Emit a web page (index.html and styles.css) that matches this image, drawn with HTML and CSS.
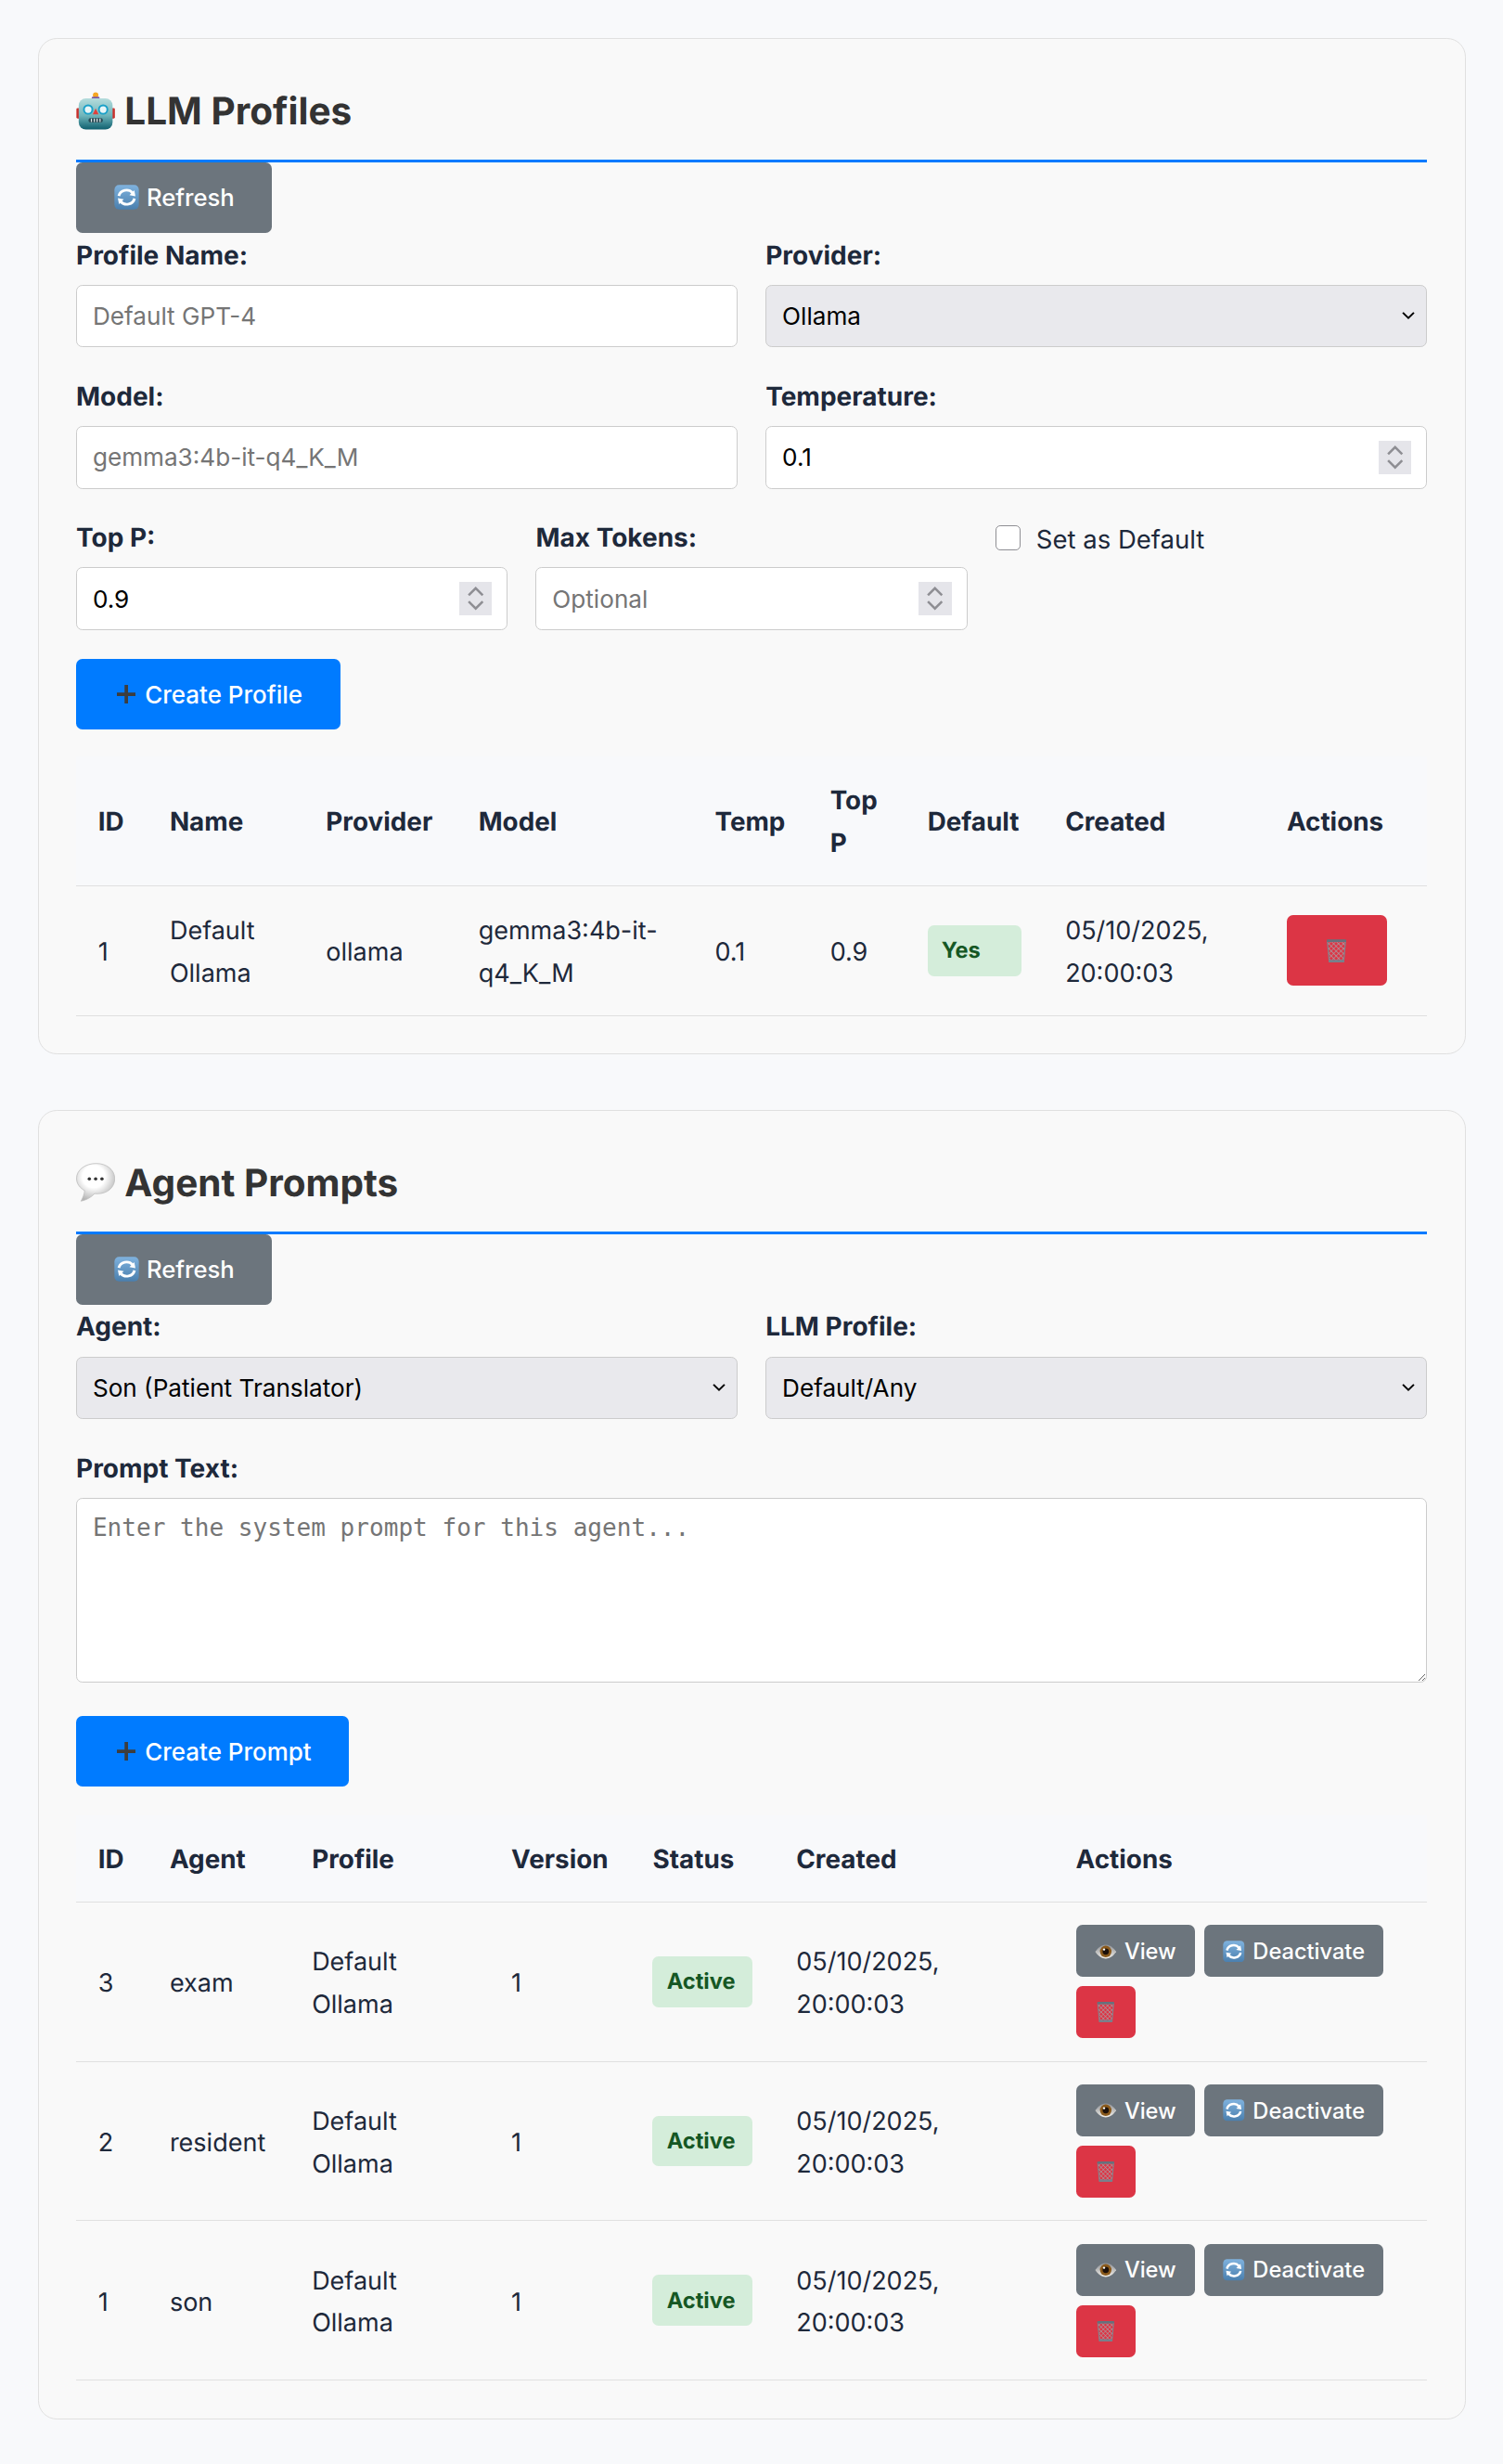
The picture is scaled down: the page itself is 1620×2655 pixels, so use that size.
FILE: index.html
```html
<!DOCTYPE html>
<html lang="en">
  <head>
    <meta charset="utf-8" />
    <meta name="viewport" content="width=device-width, initial-scale=1.0" />
    <title>LLM Profiles and Agent Prompts</title>
    <link rel="stylesheet" href="styles.css">
  </head>

  <body>
    <!-- emoji drawn once, used everywhere below -->
    <svg class="sprite" aria-hidden="true">
      <defs>
        <linearGradient id="robotFace" x1="0" y1="0" x2="0" y2="1">
          <stop offset="0" stop-color="#b5dcdc" />
          <stop offset="0.55" stop-color="#6fb5bb" />
          <stop offset="1" stop-color="#0f5f6e" />
        </linearGradient>
        <linearGradient id="refreshBox" x1="0" y1="0" x2="0" y2="1">
          <stop offset="0" stop-color="#7fb2de" />
          <stop offset="1" stop-color="#4a7fae" />
        </linearGradient>
        <radialGradient id="bubbleFill" cx="0.45" cy="0.35" r="0.65">
          <stop offset="0.45" stop-color="#ffffff" />
          <stop offset="1" stop-color="#b4b4b4" />
        </radialGradient>
        <linearGradient id="eyeWhite" x1="0" y1="0" x2="0" y2="1">
          <stop offset="0" stop-color="#8c8f94" />
          <stop offset="1" stop-color="#f2efe9" />
        </linearGradient>
        <pattern id="mesh" width="2.2" height="2.2" patternUnits="userSpaceOnUse" patternTransform="rotate(45)">
          <path d="M0 0H2.2M0 0V2.2" stroke="#a7a3a8" stroke-width="0.7" fill="none" />
        </pattern>
      </defs>

      <symbol id="i-robot" viewBox="0 0 24 24">
        <circle cx="12" cy="2.6" r="1.7" fill="#f5a623" />
        <rect x="9.6" y="3.6" width="4.8" height="1.8" rx="0.6" fill="#7a5aa6" />
        <rect x="0.2" y="10.5" width="2.4" height="6.4" rx="0.8" fill="#c9302c" />
        <rect x="21.4" y="10.5" width="2.4" height="6.4" rx="0.8" fill="#c9302c" />
        <rect x="1.6" y="4.6" width="20.8" height="19" rx="4.4" fill="url(#robotFace)" />
        <circle cx="7.4" cy="11.4" r="2.6" fill="#e8f6f8" stroke="#1aa0c8" stroke-width="1.1" />
        <circle cx="16.6" cy="11.4" r="2.6" fill="#e8f6f8" stroke="#1aa0c8" stroke-width="1.1" />
        <path d="M12 10.6L13.8 14.4H10.2Z" fill="#e0403c" />
        <rect x="7.6" y="16.6" width="8.8" height="2.7" rx="1.3" fill="#274a55" />
        <path d="M9.4 16.9V19M11.2 16.9V19M12.9 16.9V19M14.7 16.9V19" stroke="#dfe7e8" stroke-width="0.7" />
      </symbol>

      <symbol id="i-bubble" viewBox="0 0 26 26">
        <path d="M13.4.4C6.400.4.300 4.400.300 10.400c0 3.400 2.200 6.300 5.400 8-.2 2.200-1 4.500-2.400 7 3.400-.6 6.800-2.500 9-5 .6.100 1.300.1 1.900.1 6.600 0 11.500-4.200 11.500-10C25.700 4.600 20.300.4 13.400.4Z" fill="url(#bubbleFill)" stroke="#bdbdbd" stroke-width="0.5" />
        <circle cx="8.800" cy="10.600" r="1.100" fill="#333" />
        <circle cx="13" cy="10.600" r="1.100" fill="#333" />
        <circle cx="17.200" cy="10.600" r="1.100" fill="#333" />
      </symbol>

      <symbol id="i-refresh" viewBox="0 0 16 16">
        <rect x="0.2" y="0.2" width="15.6" height="15.600" rx="3" fill="url(#refreshBox)" />
        <path d="M3 7.200A5 4.600 0 0 1 11.800 5.200" fill="none" stroke="#fff" stroke-width="1.700" />
        <path d="M13.600 7.400L9.800 6.700L12.900 3.600Z" fill="#fff" />
        <path d="M13 8.800A5 4.600 0 0 1 4.200 10.800" fill="none" stroke="#fff" stroke-width="1.700" />
        <path d="M2.400 8.600L6.200 9.300L3.100 12.400Z" fill="#fff" />
      </symbol>

      <symbol id="i-eye" viewBox="0 0 16 16">
        <path d="M.3 8.200C3 4.300 5.400 3 8 3s5 1.300 7.700 5.200C13 12 10.600 13.200 8 13.200S3 12 .3 8.200Z" fill="url(#eyeWhite)" />
        <circle cx="8" cy="8" r="4.200" fill="#8a5a1c" />
        <circle cx="8" cy="8" r="2.300" fill="#1c1009" />
        <circle cx="6.800" cy="6.500" r="0.800" fill="#fff" />
      </symbol>

      <symbol id="i-trash" viewBox="0 0 16 16">
        <path d="M2.200 1.800H13.800L12.600 15H3.400Z" fill="url(#mesh)" />
        <path d="M2.200 1.800H13.800L12.600 15H3.400Z" fill="none" stroke="#7d858e" stroke-width="0.7" />
        <rect x="1.800" y="0.700" width="12.400" height="1.700" rx="0.500" fill="#66717c" />
        <rect x="3.200" y="13.800" width="9.600" height="1.600" rx="0.500" fill="#76818d" />
      </symbol>

      <symbol id="i-plus" viewBox="0 0 12 12">
        <path d="M4.900 0H7.100V4.900H12V7.100H7.100V12H4.900V7.100H0V4.900H4.900Z" fill="#3d3d3d" />
      </symbol>
    </svg>

    <section class="kort">
      <h2 class="titel"><svg class="ikon-titel"><use href="#i-robot" /></svg>LLM Profiles</h2>
      <button class="knap graa"><svg class="ikon"><use href="#i-refresh" /></svg>Refresh</button>

      <div class="raekke to">
        <div class="felt">
          <label>Profile Name:</label>
          <input type="text" placeholder="Default GPT-4">
        </div>
        <div class="felt">
          <label>Provider:</label>
          <select><option>Ollama</option></select>
        </div>
      </div>

      <div class="raekke to">
        <div class="felt">
          <label>Model:</label>
          <input type="text" placeholder="gemma3:4b-it-q4_K_M">
        </div>
        <div class="felt">
          <label>Temperature:</label>
          <div class="tal">
            <input type="text" value="0.1">
            <span class="spinner"><svg viewBox="0 0 21 21"><path d="M6 8.500L10.500 4L15 8.500M6 12.500L10.500 17L15 12.500" /></svg></span>
          </div>
        </div>
      </div>

      <div class="raekke tre">
        <div class="felt">
          <label>Top P:</label>
          <div class="tal">
            <input type="text" value="0.9">
            <span class="spinner"><svg viewBox="0 0 21 21"><path d="M6 8.500L10.500 4L15 8.500M6 12.500L10.500 17L15 12.500" /></svg></span>
          </div>
        </div>
        <div class="felt">
          <label>Max Tokens:</label>
          <div class="tal">
            <input type="text" placeholder="Optional">
            <span class="spinner"><svg viewBox="0 0 21 21"><path d="M6 8.500L10.500 4L15 8.500M6 12.500L10.500 17L15 12.500" /></svg></span>
          </div>
        </div>
        <div class="felt">
          <label class="tjek"><input type="checkbox">Set as Default</label>
        </div>
      </div>

      <button class="knap blaa"><svg class="ikon plus"><use href="#i-plus" /></svg>Create Profile</button>

      <table class="tabel">
        <colgroup>
          <col class="p1"><col class="p2"><col class="p3"><col class="p4"><col class="p5"><col class="p6"><col class="p7"><col class="p8"><col>
        </colgroup>
        <thead>
          <tr><th>ID</th><th>Name</th><th>Provider</th><th>Model</th><th>Temp</th><th>Top P</th><th>Default</th><th>Created</th><th>Actions</th></tr>
        </thead>
        <tbody>
          <tr>
            <td>1</td>
            <td>Default Ollama</td>
            <td>ollama</td>
            <td>gemma3:4b-it-q4_K_M</td>
            <td>0.1</td>
            <td>0.9</td>
            <td><span class="maerke">Yes</span></td>
            <td>05/10/2025, 20:00:03</td>
            <td><button class="knap roed slet"><svg class="ikon alene"><use href="#i-trash" /></svg></button></td>
          </tr>
        </tbody>
      </table>
    </section>

    <section class="kort">
      <h2 class="titel"><svg class="ikon-titel"><use href="#i-bubble" /></svg>Agent Prompts</h2>
      <button class="knap graa"><svg class="ikon"><use href="#i-refresh" /></svg>Refresh</button>

      <div class="raekke to">
        <div class="felt">
          <label>Agent:</label>
          <select><option>Son (Patient Translator)</option></select>
        </div>
        <div class="felt">
          <label>LLM Profile:</label>
          <select><option>Default/Any</option></select>
        </div>
      </div>

      <div class="raekke tekstfelt">
        <div class="felt">
          <label>Prompt Text:</label>
          <textarea placeholder="Enter the system prompt for this agent..."></textarea>
        </div>
      </div>

      <button class="knap blaa"><svg class="ikon plus"><use href="#i-plus" /></svg>Create Prompt</button>

      <table class="tabel prompts">
        <colgroup>
          <col class="a1"><col class="a2"><col class="a3"><col class="a4"><col class="a5"><col class="a6"><col>
        </colgroup>
        <thead>
          <tr><th>ID</th><th>Agent</th><th>Profile</th><th>Version</th><th>Status</th><th>Created</th><th>Actions</th></tr>
        </thead>
        <tbody>
          <tr>
            <td>3</td><td>exam</td><td>Default<br>Ollama</td><td>1</td>
            <td><span class="maerke">Active</span></td>
            <td>05/10/2025,<br>20:00:03</td>
            <td>
              <div class="handlinger">
                <button class="knap lille graa"><svg class="ikon"><use href="#i-eye" /></svg>View</button>
                <button class="knap lille graa"><svg class="ikon"><use href="#i-refresh" /></svg>Deactivate</button>
                <button class="knap lille roed"><svg class="ikon alene"><use href="#i-trash" /></svg></button>
              </div>
            </td>
          </tr>
          <tr>
            <td>2</td><td>resident</td><td>Default<br>Ollama</td><td>1</td>
            <td><span class="maerke">Active</span></td>
            <td>05/10/2025,<br>20:00:03</td>
            <td>
              <div class="handlinger">
                <button class="knap lille graa"><svg class="ikon"><use href="#i-eye" /></svg>View</button>
                <button class="knap lille graa"><svg class="ikon"><use href="#i-refresh" /></svg>Deactivate</button>
                <button class="knap lille roed"><svg class="ikon alene"><use href="#i-trash" /></svg></button>
              </div>
            </td>
          </tr>
          <tr>
            <td>1</td><td>son</td><td>Default<br>Ollama</td><td>1</td>
            <td><span class="maerke">Active</span></td>
            <td>05/10/2025,<br>20:00:03</td>
            <td>
              <div class="handlinger">
                <button class="knap lille graa"><svg class="ikon"><use href="#i-eye" /></svg>View</button>
                <button class="knap lille graa"><svg class="ikon"><use href="#i-refresh" /></svg>Deactivate</button>
                <button class="knap lille roed"><svg class="ikon alene"><use href="#i-trash" /></svg></button>
              </div>
            </td>
          </tr>
        </tbody>
      </table>
    </section>
  </body>
</html>
```

FILE: styles.css
```css
/* the page is a 960px layout shown at 1.6875x */
html {
  zoom: 1.6875;
}

body {
  margin: 0;
  padding: 24.5px 24px 28px;
  background-color: #f8f9fb;
  color: #1e293b;
  font-family: "Inter", "Liberation Sans", sans-serif;
  font-size: 16px;
  line-height: 1.7;
  text-rendering: geometricPrecision;
}

.sprite {
  position: absolute;
  width: 0;
  height: 0;
}

.kort {
  background-color: #f9f9f9;
  border: 1px solid #e0e0e0;
  border-radius: 12px;
  padding: 24px;
  margin-bottom: 35.5px;
}

.kort:last-of-type {
  margin-bottom: 0;
}

.titel {
  display: flex;
  align-items: center;
  margin: 0;
  padding-top: 2px;
  padding-bottom: 10px;
  border-bottom: 2px solid #007bff;
  color: #333;
  font-size: 24px;
  font-weight: 700;
  line-height: 1.7;
}

.ikon-titel {
  width: 25px;
  height: 25px;
  margin-top: -2px;
  margin-right: 6px;
}

/* knapper */
.knap {
  display: inline-flex;
  align-items: center;
  justify-content: center;
  height: 45px;
  padding: 0 24px;
  border: 0;
  border-radius: 4px;
  color: white;
  font-family: inherit;
  font-size: 15.2px;
  font-weight: 500;
  cursor: pointer;
}

.graa {
  background-color: #6c757d;
}

.blaa {
  background-color: #007bff;
  font-size: 15.4px;
}

.roed {
  background-color: #dc3545;
}

.ikon {
  width: 16px;
  height: 16px;
  margin-right: 5px;
  flex: none;
}

.ikon.plus {
  width: 12px;
  height: 12px;
  margin-left: 2px;
  margin-right: 6px;
}

.ikon.alene {
  margin-right: 0;
}

.lille {
  height: 33px;
  padding: 0 12px;
  font-size: 14px;
}

.lille .ikon {
  width: 14px;
  height: 14px;
}

/* formular */
.raekke {
  display: grid;
  gap: 18px;
  margin-bottom: 17px;
}

.to {
  grid-template-columns: 1fr 1fr;
}

.tre {
  grid-template-columns: repeat(3, 1fr);
  margin-bottom: 18.5px;
}

.tekstfelt {
  margin-bottom: 21.5px;
}

.felt label {
  display: block;
  padding-top: 1px;
  margin-bottom: 5px;
  font-size: 16.6px;
  line-height: 27.2px;
  font-weight: 700;
}

.felt input[type="text"],
.felt select,
.felt textarea {
  display: block;
  box-sizing: border-box;
  width: 100%;
  height: 40px;
  padding: 0 10px;
  border: 1px solid #ccc;
  border-radius: 4px;
  background-color: white;
  color: black;
  font-family: inherit;
  font-size: 15.5px;
}

.felt select {
  appearance: none;
  background-color: #e9e9ed;
  background-image: url("data:image/svg+xml,%3Csvg xmlns='http://www.w3.org/2000/svg' viewBox='0 0 8 5'%3E%3Cpath d='M.6.6L4 4.200 7.400.6' fill='none' stroke='black' stroke-width='1.100'/%3E%3C/svg%3E");
  background-repeat: no-repeat;
  background-position: right 7.500px center;
  background-size: 8px 5px;
}

.felt textarea {
  height: 118px;
  padding: 9px 10px;
  font-family: "DejaVu Sans Mono", monospace;
  font-size: 15.450px;
  line-height: 1.300;
}

.felt input::placeholder,
.felt textarea::placeholder {
  color: #757575;
  opacity: 1;
}

.tal {
  position: relative;
}

.spinner {
  position: absolute;
  top: 9.500px;
  right: 10px;
  width: 21px;
  height: 21px;
  background-color: #e5e5ea;
}

.spinner svg {
  display: block;
}

.spinner path {
  fill: none;
  stroke: #8e8e93;
  stroke-width: 1.500;
}

.felt label.tjek {
  display: flex;
  align-items: center;
  padding-top: 2px;
  margin: 0;
  font-size: 16.3px;
  font-weight: 400;
}

.tjek input {
  appearance: none;
  width: 16px;
  height: 16px;
  margin: -2px 10px 0 0;
  border: 1px solid #8e8e93;
  border-radius: 3px;
  background-color: white;
}

/* tabeller */
.tabel {
  width: 100%;
  margin-top: 17px;
  border-collapse: collapse;
  table-layout: fixed;
}

.prompts {
  margin-top: 18px;
}

.tabel th,
.tabel td {
  padding: 15px 14px 13px;
  border-bottom: 1px solid #e0e0e0;
  text-align: left;
}

.tabel th {
  background-color: #f8f9fb;
  font-size: 16.5px;
  line-height: 27.2px;
  font-weight: 700;
}

.p1, .a1 { width: 45.8px; }
.p2 { width: 99.8px; }
.p3 { width: 97.4px; }
.p4 { width: 151px; }
.p5 { width: 73.6px; }
.p6 { width: 62.2px; }
.p7 { width: 88px; }
.p8 { width: 141.5px; }
.a2 { width: 90.8px; }
.a3 { width: 127.4px; }
.a4 { width: 90.3px; }
.a5 { width: 91.7px; }
.a6 { width: 178.6px; }

.prompts td {
  height: 99.200px;
  padding-top: 2px;
  padding-bottom: 0;
}

/* teksten i cellerne ligger lidt lavere end knapper og maerker */
.maerke,
.handlinger,
.slet {
  margin-top: -2px;
}

.maerke {
  display: block;
  padding: 4.300px 9px;
  border-radius: 4px;
  background-color: #d4edda;
  color: #155724;
  font-size: 14px;
  font-weight: 700;
}

.handlinger {
  display: flex;
  flex-wrap: wrap;
  gap: 6px;
}
```
